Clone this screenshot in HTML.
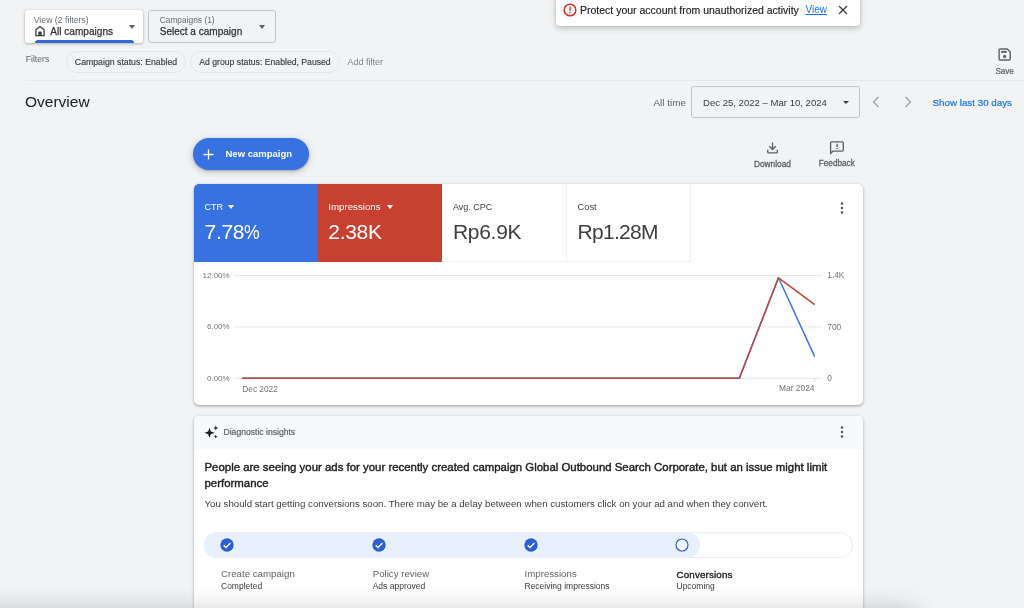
<!DOCTYPE html>
<html lang="en">
<head>
<meta charset="utf-8">
<title>Overview</title>
<style>
*{box-sizing:border-box;margin:0;padding:0}
html,body{width:1024px;height:608px;overflow:hidden}
body{background:#f1f3f4;font-family:"Liberation Sans",sans-serif;color:#3c4043;position:relative}
.abs{position:absolute;white-space:nowrap}
/* top selectors */
.sel1{left:25px;top:10px;width:118px;height:33px;background:#fff;border-radius:3px;box-shadow:0 1px 3px rgba(60,64,67,.35),0 0 1px rgba(60,64,67,.2)}
.sel1 .bar{position:absolute;left:10px;right:9.5px;bottom:0;height:3px;background:#3367d6;border-radius:3px 3px 0 0}
.sel2{left:148px;top:10px;width:128px;height:33px;border:1px solid #c2c5c9;border-radius:3px}
.small{font-size:8.5px;color:#5f6368}
.med{font-size:11px;color:#303336}
.caret{width:0;height:0;border-left:3.7px solid transparent;border-right:3.7px solid transparent;border-top:4px solid #5f6368}
.chip{height:22px;border:1px solid #e4e6e9;border-radius:11px;font-size:8.5px;color:#3c4043;line-height:20px;text-align:center;background:#f1f3f4}
.hr{left:25px;top:80px;width:999px;height:1px;background:#e6e8ea}
/* toast */
.toast{left:556px;top:-6px;width:304px;height:32px;background:#fff;border-radius:4px;box-shadow:0 2px 6px rgba(60,64,67,.3),0 0 2px rgba(60,64,67,.2)}
/* cards */
.card{left:194px;width:669px;background:#fff;border-radius:5px;box-shadow:0 1px 2px rgba(60,64,67,.3),0 1px 3px 1px rgba(60,64,67,.12)}
.tile{top:0;width:124px;height:78px}
.tile .l{position:absolute;left:11px;top:17.5px;font-size:9px}
.tile .v{position:absolute;left:11px;top:36px;font-size:21px;letter-spacing:-.3px}
.ax{font-size:8px;color:#70757a}
.grid{left:43px;width:585px;height:1px;background:#e4e6e8}
.btn{left:193px;top:138px;width:116px;height:32px;border-radius:16px;background:#3871e0;box-shadow:0 1px 2px rgba(60,64,67,.3),0 2px 6px 1px rgba(60,64,67,.2);color:#fff}
.step-t{font-size:9.7px;color:#5f6368}
.step-s{font-size:8.5px;color:#3c4043}
</style>
</head>
<body>
<div id="root" style="position:absolute;left:0;top:0;width:1024px;height:608px;will-change:transform">

<!-- top selectors -->
<div class="abs sel1">
  <div class="abs small" style="left:8.7px;top:4.5px;font-size:8.72px;color:#696e73">View (2 filters)</div>
  <svg class="abs" style="left:9.300px;top:15.200px" width="12" height="12" viewBox="0 0 12 12"><path d="M6 1.400 1.900 4.700V10.700H10.100V4.700z" fill="none" stroke="#3c4043" stroke-width="1.300" stroke-linejoin="round"/><rect x="4.300" y="6.600" width="3.400" height="4.100" fill="#3c4043"/></svg>
  <div class="abs med" style="left:25.3px;top:15.5px;font-size:10.08px;-webkit-text-stroke:.25px #303336">All campaigns</div>
  <div class="abs caret" style="left:103.6px;top:15px"></div>
  <div class="bar"></div>
</div>
<div class="abs sel2">
  <div class="abs small" style="left:10.7px;top:4px;font-size:8.4px;color:#696e73">Campaigns (1)</div>
  <div class="abs med" style="left:10.7px;top:14.5px;font-size:10.04px;-webkit-text-stroke:.25px #303336">Select a campaign</div>
  <div class="abs caret" style="left:109.5px;top:14px"></div>
</div>

<!-- filters -->
<div class="abs small" style="left:25.8px;top:53.5px;font-size:8.6px">Filters</div>
<div class="abs chip" style="left:66px;top:51px;width:120px;font-size:8.72px;-webkit-text-stroke:.15px #3c4043">Campaign status: Enabled</div>
<div class="abs chip" style="left:190px;top:51px;width:150px;font-size:8.66px;-webkit-text-stroke:.15px #3c4043">Ad group status: Enabled, Paused</div>
<div class="abs small" style="left:347.5px;top:56.600px;color:#80868b;font-size:9px">Add filter</div>
<div class="abs hr"></div>

<!-- save -->
<svg class="abs" style="left:994px;top:44px" width="24" height="20" viewBox="994 44 24 20"><path d="M1000.100 49h7.200l2.900 2.900v7q0 1-1 1h-9.100q-1 0-1-1v-8.900q0-1 1-1z" fill="none" stroke="#5f6368" stroke-width="1.450" stroke-linejoin="round"/><rect x="1001.200" y="50.900" width="5.500" height="2" fill="#5f6368"/><circle cx="1004.600" cy="56.500" r="1.650" fill="#5f6368"/></svg>
<div class="abs small" style="left:995.500px;top:66.800px;font-size:8.200px;letter-spacing:-.1px;-webkit-text-stroke:.2px #5f6368">Save</div>

<!-- toast -->
<div class="abs toast">
  <svg class="abs" style="left:7px;top:9px" width="14" height="14" viewBox="0 0 14 14"><circle cx="7" cy="7" r="5.800" fill="none" stroke="#d93025" stroke-width="1.500"/><rect x="6.300" y="3.600" width="1.400" height="4.200" fill="#d93025"/><rect x="6.300" y="8.900" width="1.400" height="1.400" fill="#d93025"/></svg>
  <div class="abs" style="left:24px;top:10px;font-size:10.5px;-webkit-text-stroke:.15px #202124;color:#202124">Protect your account from unauthorized activity</div>
  <div class="abs" style="left:249.5px;top:10px;font-size:10px;color:#1a73e8;text-decoration:underline">View</div>
  <svg class="abs" style="left:282px;top:11px" width="10" height="10" viewBox="0 0 10 10"><path d="M1 1l8 8M9 1l-8 8" stroke="#3c4043" stroke-width="1.300" fill="none"/></svg>
</div>

<!-- overview row -->
<div class="abs" style="left:25px;top:93px;font-size:15.500px;color:#202124">Overview</div>
<div class="abs small" style="left:653.5px;top:96.5px;font-size:9.9px">All time</div>
<div class="abs" style="left:691px;top:86px;width:169px;height:32px;border:1px solid #c2c5c9;border-radius:3px">
  <div class="abs" style="left:11px;top:10px;font-size:9.57px;color:#3c4043">Dec 25, 2022 – Mar 10, 2024</div>
  <div class="abs caret" style="left:150.5px;top:14px;border-left-width:3.400px;border-right-width:3.400px;border-top-width:3.600px;border-top-color:#3c4043"></div>
</div>
<svg class="abs" style="left:871px;top:96px" width="10" height="12" viewBox="0 0 10 12"><path d="M7.500 1 2.500 6l5 5" fill="none" stroke="#9aa0a6" stroke-width="1.200"/></svg>
<svg class="abs" style="left:903px;top:96px" width="10" height="12" viewBox="0 0 10 12"><path d="M2.500 1l5 5-5 5" fill="none" stroke="#9aa0a6" stroke-width="1.200"/></svg>
<div class="abs" style="left:932.5px;top:96.5px;font-size:9.8px;color:#1a73e8;-webkit-text-stroke:.2px #1a73e8">Show last 30 days</div>

<!-- new campaign -->
<div class="abs btn">
  <svg class="abs" style="left:10px;top:11px" width="11" height="11" viewBox="0 0 11 11"><path d="M5.500 0.500v10M0.500 5.500h10" stroke="#fff" stroke-width="1.300"/></svg>
  <div class="abs" style="left:32.5px;top:10px;font-size:9.5px;font-weight:bold">New campaign</div>
</div>

<!-- download / feedback -->
<svg class="abs" style="left:760px;top:138px" width="100" height="20" viewBox="760 138 100 20" fill="none" stroke="#5f6368" stroke-width="1.350">
  <path d="M772.500 142.600V149.300M769.300 146.300 772.500 149.500 775.700 146.300"/>
  <path d="M767.700 150.200v1.700q0 1 1 1h7.600q1 0 1-1v-1.700" stroke-linecap="round"/>
  <path d="M831.600 141.900h10.700q1 0 1 1v7.200q0 1-1 1h-9.200l-2.500 2.500v-10.700q0-1 1-1z" stroke-linejoin="round"/>
  <path d="M837.100 143.700v3.300M837.100 148v1.300" stroke-width="1.400"/>
</svg>
<div class="abs small" style="left:754px;top:158.500px;font-size:8.300px;color:#5f6368;-webkit-text-stroke:.3px #5f6368">Download</div>
<div class="abs small" style="left:818.800px;top:158.500px;font-size:8.200px;color:#5f6368;-webkit-text-stroke:.3px #5f6368">Feedback</div>

<!-- card 1 -->
<div class="abs card" style="top:184px;height:221px;overflow:hidden">
  <div class="abs tile" style="left:0;background:#3871e0;color:#fff">
    <div class="l" style="left:10.5px">CTR</div><div class="abs caret" style="left:33.500px;top:21px;border-top-color:#fff"></div>
    <div class="v" style="left:10.5px">7.78<span style="display:inline-block;transform:scaleX(.84);transform-origin:0 50%">%</span></div>
  </div>
  <div class="abs tile" style="left:124px;background:#c84030;color:#fff">
    <div class="l" style="font-size:9.7px;top:16.5px;left:10.300px">Impressions</div><div class="abs caret" style="left:69px;top:21px;border-top-color:#fff"></div>
    <div class="v" style="left:10.300px">2.38K</div>
  </div>
  <div class="abs tile" style="left:248px;width:125px;border-right:1px solid #eef0f2;border-bottom:1px solid #eef0f2">
    <div class="l">Avg. CPC</div>
    <div class="v">Rp6.9K</div>
  </div>
  <div class="abs tile" style="left:373px;border-right:1px solid #eef0f2;border-bottom:1px solid #eef0f2">
    <div class="l" style="left:10.5px;font-size:9.3px">Cost</div>
    <div class="v" style="left:10.5px;letter-spacing:-.7px">Rp1.28M</div>
  </div>
  <svg class="abs" style="left:645.500px;top:17px" width="4" height="14" viewBox="0 0 4 14"><circle cx="2" cy="2.500" r="1.200" fill="#4a4e52"/><circle cx="2" cy="7" r="1.200" fill="#4a4e52"/><circle cx="2" cy="11.500" r="1.200" fill="#4a4e52"/></svg>

  <svg class="abs" style="left:0;top:0" width="669" height="220" viewBox="194 184 669 220">
    <path d="M234 275.500H822M234 326.900H822M234 378.300H822" stroke="#e4e6e8" stroke-width="1"/>
    <path d="M814.700 378.300v4" stroke="#dadce0" stroke-width="1"/>
    <path d="M242.300 378.300H739.300L778.500 277.800 814.700 356.600" fill="none" stroke="#3f73e0" stroke-width="1.500" stroke-linejoin="round"/>
    <path d="M242.300 378.300H739.300L778.500 277.800 814.700 304.700" fill="none" stroke="#c5443a" stroke-width="1.500" stroke-linejoin="round"/>
  </svg>
  <div class="abs ax" style="left:0;width:35.700px;text-align:right;top:86.900px">12.00%</div>
  <div class="abs ax" style="left:0;width:35.700px;text-align:right;top:138.300px">6.00%</div>
  <div class="abs ax" style="left:0;width:35.700px;text-align:right;top:189.700px">0.00%</div>
  <div class="abs ax" style="left:633.300px;top:86.300px;font-size:8.300px">1.4K</div>
  <div class="abs ax" style="left:633.300px;top:137.800px;font-size:8.300px">700</div>
  <div class="abs ax" style="left:633.300px;top:188.900px;font-size:8.300px">0</div>
  <div class="abs ax" style="left:48.300px;top:199.800px;font-size:8.300px">Dec 2022</div>
  <div class="abs ax" style="right:48.500px;top:199.300px;font-size:8.400px">Mar 2024</div>
</div>

<!-- card 2 -->
<div class="abs card" style="top:416px;height:220px;overflow:hidden">
  <div class="abs" style="left:0;top:0;width:669px;height:32.6px;background:#f8f9fa"></div>
  <svg class="abs" style="left:10px;top:9px" width="15" height="15" viewBox="0 0 15 15"><path d="M5.500 2.800 6.900 6.400 10.500 7.800 6.900 9.200 5.500 12.800 4.100 9.200 0.500 7.800 4.100 6.400z" fill="#202124"/><path d="M11.800 0.600l.7 1.700 1.700.7-1.700.7-.7 1.700-.7-1.700-1.700-.7 1.700-.7z" fill="#202124"/><path d="M11.700 9.800l.55 1.250 1.250.55-1.250.55-.55 1.250-.55-1.250-1.250-.55 1.250-.55z" fill="#202124"/></svg>
  <div class="abs small" style="left:29.500px;top:11px;font-size:8.600px;color:#5f6368;-webkit-text-stroke:.2px #5f6368">Diagnostic insights</div>
  <svg class="abs" style="left:645.500px;top:9px" width="4" height="14" viewBox="0 0 4 14"><circle cx="2" cy="2.500" r="1.200" fill="#4a4e52"/><circle cx="2" cy="7" r="1.200" fill="#4a4e52"/><circle cx="2" cy="11.500" r="1.200" fill="#4a4e52"/></svg>

  <div class="abs" style="left:10.500px;top:43px;width:650px;white-space:normal;font-size:11.420px;line-height:16.300px;color:#202124;-webkit-text-stroke:.4px #202124">People are seeing your ads for your recently created campaign Global Outbound Search Corporate, but an issue might limit performance</div>
  <div class="abs" style="left:10.500px;top:82px;font-size:9.700px;color:#3c4043">You should start getting conversions soon. There may be a delay between when customers click on your ad and when they convert.</div>

  <div class="abs" style="left:10px;top:116px;width:649px;height:26px;border-radius:13px;border:1px solid #e8eaed;background:#fff"></div>
  <div class="abs" style="left:10px;top:116px;width:496px;height:26px;border-radius:13px;background:#e8f0fe"></div>

  <svg class="abs" style="left:25.600px;top:121.800px" width="14" height="14" viewBox="0 0 14 14"><circle cx="7" cy="7" r="6.700" fill="#2b5fd3"/><path d="M3.700 7.200 6 9.400l4.400-4.500" fill="none" stroke="#fff" stroke-width="1.400"/></svg>
  <svg class="abs" style="left:177.600px;top:121.800px" width="14" height="14" viewBox="0 0 14 14"><circle cx="7" cy="7" r="6.700" fill="#2b5fd3"/><path d="M3.700 7.200 6 9.400l4.400-4.500" fill="none" stroke="#fff" stroke-width="1.400"/></svg>
  <svg class="abs" style="left:329.600px;top:121.800px" width="14" height="14" viewBox="0 0 14 14"><circle cx="7" cy="7" r="6.700" fill="#2b5fd3"/><path d="M3.700 7.200 6 9.400l4.400-4.500" fill="none" stroke="#fff" stroke-width="1.400"/></svg>
  <svg class="abs" style="left:480.700px;top:121.600px" width="14" height="14" viewBox="0 0 14 14"><circle cx="7" cy="7" r="6" fill="#f3f7fe" stroke="#2b5fd3" stroke-width="1.200"/></svg>

  <div class="abs step-t" style="left:27px;top:152px">Create campaign</div>
  <div class="abs step-s" style="left:27px;top:165px">Completed</div>
  <div class="abs step-t" style="left:178.700px;top:152px">Policy review</div>
  <div class="abs step-s" style="left:178.700px;top:165px">Ads approved</div>
  <div class="abs step-t" style="left:330.500px;top:152px">Impressions</div>
  <div class="abs step-s" style="left:330.500px;top:165px">Receiving impressions</div>
  <div class="abs step-t" style="left:482.500px;top:152.800px;color:#202124;font-size:9.800px;letter-spacing:.15px;-webkit-text-stroke:.35px #202124">Conversions</div>
  <div class="abs step-s" style="left:482.500px;top:165px">Upcoming</div>
</div>

<!-- bottom fade -->
<div class="abs" style="left:-60px;top:612px;width:980px;height:40px;border-radius:0 16px 0 0;box-shadow:0 0 26px rgba(32,33,36,.29)"></div>

</div>
</body>
</html>
